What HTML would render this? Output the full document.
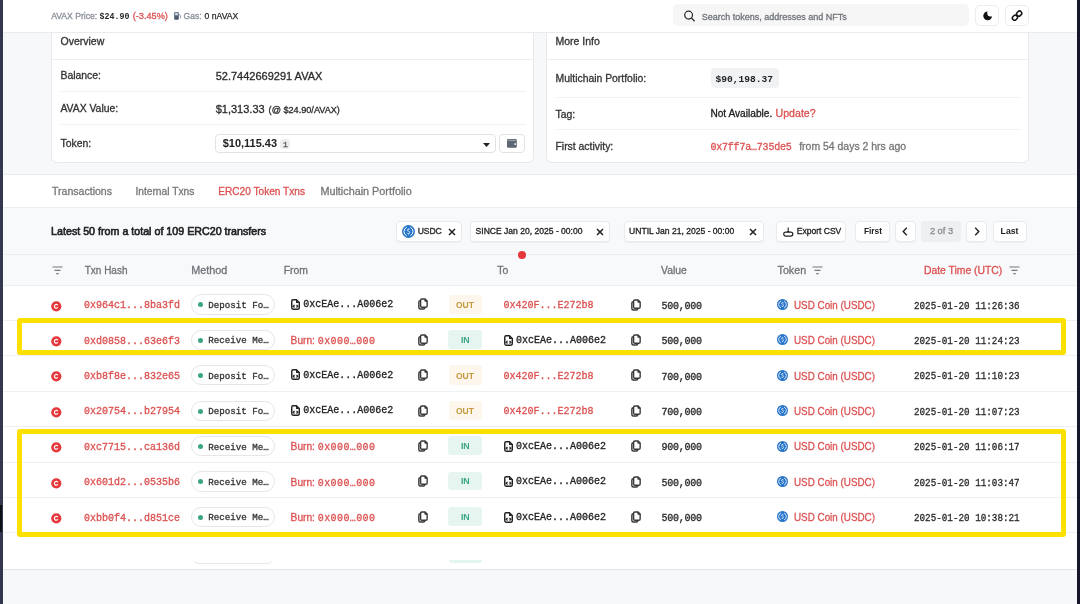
<!DOCTYPE html>
<html><head><meta charset="utf-8"><title>ERC20 Token Txns</title>
<style>
html,body{margin:0;padding:0;}
body{width:1080px;height:604px;overflow:hidden;position:relative;background:#f7f8fa;font-family:'Liberation Sans',sans-serif;}
#root{position:absolute;left:0;top:0;width:1080px;height:604px;will-change:transform;background:#f7f8fa;overflow:hidden;}
.t{position:absolute;white-space:nowrap;line-height:1;-webkit-text-stroke-width:0.3px;}
.b{position:absolute;}
.edgeL{position:absolute;left:0;top:0;width:3.3px;height:604px;background:#333850;z-index:10;}
.edgeR{position:absolute;left:1076.6px;top:0;width:3.4px;height:604px;background:#16172a;z-index:10;}
</style></head><body>
<div id="root">
<div class="edgeL"></div><div class="edgeR"></div><div class="b" style="left:0;top:504.7px;width:2.4px;height:27.8px;background:#0e0f14;z-index:11"></div>
<div class="b" style="left:3.00px;top:0.00px;width:1074.00px;height:32.00px;background:#fff;border-bottom:1px solid #e9ebee;z-index:5"></div>
<div class="t" style="left:51.20px;top:12.00px;font-size:8.6px;color:#8b9099;font-family:'Liberation Sans', sans-serif;font-weight:400;z-index:6;">AVAX Price:</div>
<div class="t" style="left:99.50px;top:13.00px;font-size:8.3px;color:#2a2a2a;font-family:'Liberation Mono', monospace;font-weight:700;z-index:6;-webkit-text-stroke-width:0;">$24.90</div>
<div class="t" style="left:132.70px;top:12.00px;font-size:9.2px;color:#dc5252;font-family:'Liberation Sans', sans-serif;font-weight:400;z-index:6;">(-3.45%)</div>
<svg class="b" style="left:174px;top:12px;z-index:6" width="7.5" height="8" viewBox="0 0 7.5 8"><rect x="0.2" y="0.3" width="4.6" height="7.5" rx="0.8" fill="#4d5b6e"/><rect x="1.1" y="1.2" width="2.8" height="2.1" fill="#dfe5ee"/><path d="M4.8 2.4 L6.6 3.6 V6.4" stroke="#7f8ea3" stroke-width="0.9" fill="none"/></svg>
<div class="t" style="left:183.60px;top:12.00px;font-size:8.6px;color:#8b9099;font-family:'Liberation Sans', sans-serif;font-weight:400;z-index:6;">Gas:</div>
<div class="t" style="left:204.60px;top:12.00px;font-size:8.6px;color:#2a2a2a;font-family:'Liberation Sans', sans-serif;font-weight:400;-webkit-text-stroke:0.25px #2a2a2a;z-index:6;">0 nAVAX</div>
<div class="b" style="left:673.00px;top:4.20px;width:296.00px;height:22.20px;background:#f6f6f7;border-radius:5px;z-index:6"></div>
<svg class="b" style="left:683px;top:10.2px;z-index:7" width="13" height="13" viewBox="0 0 13 13"><circle cx="5.6" cy="5.1" r="3.9" fill="none" stroke="#2a2a2a" stroke-width="1.25"/><path d="M8.4 7.9 L11.6 11.2" stroke="#2a2a2a" stroke-width="1.3"/></svg>
<div class="t" style="left:701.80px;top:13.00px;font-size:9.0px;color:#70747a;font-family:'Liberation Sans', sans-serif;font-weight:400;z-index:7;z-index:6;">Search tokens, addresses and NFTs</div>
<div class="b" style="left:975.30px;top:4.50px;width:23.60px;height:21.90px;background:#fff;border:1px solid #ececee;border-radius:5px;box-sizing:border-box;z-index:6"></div>
<svg class="b" style="left:982.6px;top:10.8px;z-index:7" width="10" height="10" viewBox="0 0 10 10"><defs><mask id="mm"><rect width="10" height="10" fill="#fff"/><circle cx="7.7" cy="2.1" r="3.5" fill="#000"/></mask></defs><circle cx="4.7" cy="4.8" r="4.4" fill="#111" mask="url(#mm)"/></svg>
<div class="b" style="left:1005.30px;top:4.50px;width:23.90px;height:21.90px;background:#fff;border:1px solid #ececee;border-radius:5px;box-sizing:border-box;z-index:6"></div>
<svg class="b" style="left:1011.2px;top:9.8px;z-index:7" width="12" height="11.5" viewBox="0 0 12 11.5"><g fill="none" stroke="#111" stroke-width="1.5"><rect x="6.05" y="1.0" width="4.3" height="5.2" rx="1.9" transform="rotate(45 8.2 3.6)"/><rect x="1.75" y="5.1" width="4.3" height="5.2" rx="1.9" transform="rotate(45 3.9 7.7)"/></g></svg>
<div class="b" style="left:51.00px;top:10.00px;width:482.50px;height:152.50px;background:#fff;border:1px solid #e7e9ec;border-radius:6px;box-sizing:border-box"></div>
<div class="b" style="left:52.50px;top:58.50px;width:480.00px;height:1.00px;background:#eceef0"></div>
<div class="t" style="left:60.50px;top:36.00px;font-size:10.5px;color:#333;font-family:'Liberation Sans', sans-serif;font-weight:400;">Overview</div>
<div class="t" style="left:60.50px;top:71.00px;font-size:10.4px;color:#333;font-family:'Liberation Sans', sans-serif;font-weight:400;">Balance:</div>
<div class="t" style="left:215.70px;top:71.00px;font-size:11.0px;color:#2b2b2b;font-family:'Liberation Sans', sans-serif;font-weight:400;">52.7442669291 AVAX</div>
<div class="b" style="left:60.50px;top:91.20px;width:465.50px;height:1.00px;background:#f0f1f3"></div>
<div class="t" style="left:60.40px;top:104.00px;font-size:10.4px;color:#333;font-family:'Liberation Sans', sans-serif;font-weight:400;">AVAX Value:</div>
<div class="t" style="left:215.70px;top:104.00px;font-size:11.0px;color:#2b2b2b;font-family:'Liberation Sans', sans-serif;font-weight:400;">$1,313.33</div>
<div class="t" style="left:268.60px;top:106.00px;font-size:9.15px;color:#2b2b2b;font-family:'Liberation Sans', sans-serif;font-weight:400;">(@ $24.90/AVAX)</div>
<div class="b" style="left:60.50px;top:124.40px;width:465.50px;height:1.00px;background:#f0f1f3"></div>
<div class="t" style="left:60.50px;top:139.00px;font-size:10.4px;color:#333;font-family:'Liberation Sans', sans-serif;font-weight:400;">Token:</div>
<div class="b" style="left:215.10px;top:134.00px;width:281.00px;height:19.00px;background:#fff;border:1px solid #dfe2e6;border-radius:4px;box-sizing:border-box"></div>
<div class="t" style="left:222.70px;top:138.00px;font-size:10.99px;color:#222;font-family:'Liberation Sans', sans-serif;font-weight:700;-webkit-text-stroke-width:0;">$10,115.43</div>
<div class="b" style="left:280.30px;top:138.60px;width:10.20px;height:10.60px;background:#eceef0;border-radius:3px"></div>
<div class="t" style="left:283.00px;top:141.00px;font-size:8px;color:#555;font-family:'Liberation Mono', monospace;font-weight:400;">1</div>
<svg class="b" style="left:483.00px;top:142.50px" width="7" height="4" viewBox="0 0 7 4"><path d="M0 0 H7 L3.5 4 Z" fill="#222"/></svg>
<div class="b" style="left:499.10px;top:134.00px;width:26.00px;height:19.00px;background:#fff;border:1px solid #dfe2e6;border-radius:4px;box-sizing:border-box"></div>
<svg class="b" style="left:507.30px;top:139.40px" width="10" height="9" viewBox="0 0 10 9"><rect x="0" y="0" width="9.8" height="8.8" rx="1.2" fill="#5d6673"/><rect x="0.6" y="0.9" width="8.6" height="0.9" fill="#a9b0ba"/><rect x="7.2" y="4.2" width="1.8" height="1.8" fill="#d5d9de"/></svg>
<div class="b" style="left:546.30px;top:10.00px;width:482.90px;height:152.50px;background:#fff;border:1px solid #e7e9ec;border-radius:6px;box-sizing:border-box"></div>
<div class="b" style="left:547.30px;top:58.50px;width:481.00px;height:1.00px;background:#eceef0"></div>
<div class="t" style="left:555.50px;top:36.00px;font-size:10.5px;color:#333;font-family:'Liberation Sans', sans-serif;font-weight:400;">More Info</div>
<div class="t" style="left:555.50px;top:74.00px;font-size:10.4px;color:#333;font-family:'Liberation Sans', sans-serif;font-weight:400;">Multichain Portfolio:</div>
<div class="b" style="left:710.50px;top:68.00px;width:68.80px;height:19.50px;background:#f1f2f4;border-radius:4px"></div>
<div class="t" style="left:715.50px;top:75.00px;font-size:9.6px;color:#222;font-family:'Liberation Mono', monospace;font-weight:700;-webkit-text-stroke-width:0;">$90,198.37</div>
<div class="b" style="left:555.50px;top:96.60px;width:465.50px;height:1.00px;background:#f0f1f3"></div>
<div class="t" style="left:555.50px;top:110.00px;font-size:10.4px;color:#333;font-family:'Liberation Sans', sans-serif;font-weight:400;">Tag:</div>
<div class="t" style="left:710.40px;top:109.00px;font-size:10.17px;color:#222;font-family:'Liberation Sans', sans-serif;font-weight:400;">Not Available.</div>
<div class="t" style="left:775.60px;top:108.00px;font-size:10.58px;color:#dc5252;font-family:'Liberation Sans', sans-serif;font-weight:400;">Update?</div>
<div class="b" style="left:555.50px;top:129.40px;width:465.50px;height:1.00px;background:#f0f1f3"></div>
<div class="t" style="left:555.50px;top:142.00px;font-size:10.4px;color:#333;font-family:'Liberation Sans', sans-serif;font-weight:400;">First activity:</div>
<div class="t" style="left:710.40px;top:143.00px;font-size:10px;color:#dc5252;font-family:'Liberation Mono', monospace;font-weight:400;letter-spacing:-0.2px;">0x7ff7a…735de5</div>
<div class="t" style="left:799.20px;top:142.00px;font-size:10.46px;color:#777;font-family:'Liberation Sans', sans-serif;font-weight:400;">from 54 days 2 hrs ago</div>
<div class="b" style="left:3.00px;top:174.00px;width:1074.00px;height:395.50px;background:#fff;border-top:1px solid #e9ebee;border-bottom:1px solid #e3e5e8;box-sizing:border-box"></div>
<div class="t" style="left:52.00px;top:186.00px;font-size:10.55px;color:#777;font-family:'Liberation Sans', sans-serif;font-weight:400;">Transactions</div>
<div class="t" style="left:135.40px;top:187.00px;font-size:10.24px;color:#777;font-family:'Liberation Sans', sans-serif;font-weight:400;">Internal Txns</div>
<div class="t" style="left:218.20px;top:187.00px;font-size:10.14px;color:#dc5252;font-family:'Liberation Sans', sans-serif;font-weight:400;">ERC20 Token Txns</div>
<div class="t" style="left:320.40px;top:186.00px;font-size:10.82px;color:#777;font-family:'Liberation Sans', sans-serif;font-weight:400;">Multichain Portfolio</div>
<div class="b" style="left:3.00px;top:207.00px;width:1074.00px;height:78.00px;background:#f8f9fb;border-top:1px solid #eceef0;box-sizing:border-box"></div>
<div class="b" style="left:3.00px;top:254.30px;width:1074.00px;height:1.00px;background:#eceef0"></div>
<div class="b" style="left:3.00px;top:284.60px;width:1074.00px;height:1.00px;background:#eceef0"></div>
<div class="t" style="left:51.10px;top:226.00px;font-size:10.7px;color:#222;font-family:'Liberation Sans', sans-serif;font-weight:400;-webkit-text-stroke-width:0.6px;">Latest 50 from a total of 109 ERC20 transfers</div>
<div class="b" style="left:396.40px;top:220.60px;width:66.00px;height:21.20px;background:#fff;border:1px solid #e8eaed;border-radius:4px;box-sizing:border-box;box-shadow:0 1px 1px rgba(0,0,0,0.04)"></div>
<svg class="b" style="left:402.10px;top:224.80px" width="13" height="13" viewBox="0 0 20 20"><circle cx="10" cy="10" r="10" fill="#2775ca"/><path d="M7.2 3.6 A7 7 0 0 0 7.2 16.4 M12.8 3.6 A7 7 0 0 1 12.8 16.4" fill="none" stroke="#fff" stroke-width="1.5"/><path d="M12 7.6 C11.6 6.8 10.8 6.6 10 6.6 C8.9 6.6 8.1 7.1 8.1 8 C8.1 9.9 12 9.2 12 11.6 C12 12.6 11.1 13.3 10 13.3 C9 13.3 8.3 12.9 7.9 12.1 M10 5.4 V6.6 M10 13.3 V14.6" fill="none" stroke="#fff" stroke-width="1.2"/></svg>
<div class="t" style="left:417.70px;top:227.00px;font-size:8.6px;color:#333;font-family:'Liberation Sans', sans-serif;font-weight:400;-webkit-text-stroke-width:0.4px;letter-spacing:-0.1px;">USDC</div>
<svg class="b" style="left:448.00px;top:227.60px" width="8" height="8" viewBox="0 0 8 8"><path d="M1 1 L7 7 M7 1 L1 7" stroke="#222" stroke-width="1.5" fill="none"/></svg>
<div class="b" style="left:469.90px;top:220.60px;width:140.10px;height:21.20px;background:#fff;border:1px solid #e8eaed;border-radius:4px;box-sizing:border-box;box-shadow:0 1px 1px rgba(0,0,0,0.04)"></div>
<div class="t" style="left:475.60px;top:227.00px;font-size:8.55px;color:#222;font-family:'Liberation Sans', sans-serif;font-weight:400;">SINCE Jan 20, 2025 - 00:00</div>
<svg class="b" style="left:596.00px;top:227.60px" width="8" height="8" viewBox="0 0 8 8"><path d="M1 1 L7 7 M7 1 L1 7" stroke="#222" stroke-width="1.5" fill="none"/></svg>
<div class="b" style="left:623.70px;top:220.60px;width:140.30px;height:21.20px;background:#fff;border:1px solid #e8eaed;border-radius:4px;box-sizing:border-box;box-shadow:0 1px 1px rgba(0,0,0,0.04)"></div>
<div class="t" style="left:629.10px;top:227.00px;font-size:8.55px;color:#222;font-family:'Liberation Sans', sans-serif;font-weight:400;">UNTIL Jan 21, 2025 - 00:00</div>
<svg class="b" style="left:749.20px;top:227.60px" width="8" height="8" viewBox="0 0 8 8"><path d="M1 1 L7 7 M7 1 L1 7" stroke="#222" stroke-width="1.5" fill="none"/></svg>
<div class="b" style="left:776.40px;top:220.60px;width:69.90px;height:21.20px;background:#fff;border:1px solid #e8eaed;border-radius:4px;box-sizing:border-box;box-shadow:0 1px 1px rgba(0,0,0,0.04)"></div>
<svg class="b" style="left:783.00px;top:226.50px" width="10.5" height="10" viewBox="0 0 10.5 10"><path d="M5.2 0.6 V5.2" stroke="#222" stroke-width="1.1" fill="none"/><path d="M3.7 4 L5.2 5.6 L6.7 4 Z" fill="#222"/><rect x="0.7" y="5.1" width="9.1" height="4" rx="2" fill="none" stroke="#222" stroke-width="1.2"/></svg>
<div class="t" style="left:796.70px;top:227.00px;font-size:8.54px;color:#222;font-family:'Liberation Sans', sans-serif;font-weight:400;">Export CSV</div>
<div class="b" style="left:854.80px;top:220.60px;width:35.50px;height:21.20px;background:#fff;border:1px solid #e8eaed;border-radius:4px;box-sizing:border-box;box-shadow:0 1px 1px rgba(0,0,0,0.04)"></div>
<div class="t" style="left:863.90px;top:227.00px;font-size:8.35px;color:#222;font-family:'Liberation Sans', sans-serif;font-weight:700;-webkit-text-stroke-width:0;">First</div>
<div class="b" style="left:895.00px;top:220.60px;width:21.40px;height:21.20px;background:#fff;border:1px solid #e8eaed;border-radius:4px;box-sizing:border-box;box-shadow:0 1px 1px rgba(0,0,0,0.04)"></div>
<svg class="b" style="left:902.00px;top:227.00px" width="6" height="9" viewBox="0 0 6 9"><path d="M4.8 0.8 L1.2 4.5 L4.8 8.2" stroke="#222" stroke-width="1.4" fill="none"/></svg>
<div class="b" style="left:921.20px;top:220.60px;width:40.20px;height:21.20px;background:#eeeff1;border-radius:4px"></div>
<div class="t" style="left:929.90px;top:227.00px;font-size:9.27px;color:#8a8d91;font-family:'Liberation Sans', sans-serif;font-weight:400;">2 of 3</div>
<div class="b" style="left:966.40px;top:220.60px;width:21.10px;height:21.20px;background:#fff;border:1px solid #e8eaed;border-radius:4px;box-sizing:border-box;box-shadow:0 1px 1px rgba(0,0,0,0.04)"></div>
<svg class="b" style="left:974.00px;top:227.00px" width="6" height="9" viewBox="0 0 6 9"><path d="M1.2 0.8 L4.8 4.5 L1.2 8.2" stroke="#222" stroke-width="1.4" fill="none"/></svg>
<div class="b" style="left:992.50px;top:220.60px;width:34.20px;height:21.20px;background:#fff;border:1px solid #e8eaed;border-radius:4px;box-sizing:border-box;box-shadow:0 1px 1px rgba(0,0,0,0.04)"></div>
<div class="t" style="left:1000.60px;top:227.00px;font-size:8.66px;color:#222;font-family:'Liberation Sans', sans-serif;font-weight:700;-webkit-text-stroke-width:0;">Last</div>
<div class="b" style="left:518.20px;top:251.10px;width:8.00px;height:8.00px;background:#e5383d;border-radius:50%;z-index:3"></div>
<svg class="b" style="left:51.50px;top:266.00px" width="11" height="9" viewBox="0 0 11 9"><path d="M0.5 1 H10.5 M2.5 4.3 H8.5 M4.3 7.6 H6.7" stroke="#777" stroke-width="1.2" fill="none"/></svg>
<div class="t" style="left:84.70px;top:266.00px;font-size:10.0px;color:#6f7378;font-family:'Liberation Sans', sans-serif;font-weight:400;">Txn Hash</div>
<div class="t" style="left:191.20px;top:265.00px;font-size:10.85px;color:#6f7378;font-family:'Liberation Sans', sans-serif;font-weight:400;">Method</div>
<div class="t" style="left:283.70px;top:266.00px;font-size:10.4px;color:#6f7378;font-family:'Liberation Sans', sans-serif;font-weight:400;">From</div>
<div class="t" style="left:497.30px;top:266.00px;font-size:10.4px;color:#6f7378;font-family:'Liberation Sans', sans-serif;font-weight:400;">To</div>
<div class="t" style="left:661.10px;top:266.00px;font-size:10.4px;color:#6f7378;font-family:'Liberation Sans', sans-serif;font-weight:400;">Value</div>
<div class="t" style="left:777.60px;top:265.00px;font-size:10.68px;color:#6f7378;font-family:'Liberation Sans', sans-serif;font-weight:400;">Token</div>
<svg class="b" style="left:812.00px;top:266.20px" width="11" height="9" viewBox="0 0 11 9"><path d="M0.5 1 H10.5 M2.5 4.3 H8.5 M4.3 7.6 H6.7" stroke="#777" stroke-width="1.2" fill="none"/></svg>
<div class="t" style="left:923.90px;top:266.00px;font-size:10.39px;color:#dc5252;font-family:'Liberation Sans', sans-serif;font-weight:400;">Date Time (UTC)</div>
<svg class="b" style="left:1009.00px;top:266.20px" width="11" height="9" viewBox="0 0 11 9"><path d="M0.5 1 H10.5 M2.5 4.3 H8.5 M4.3 7.6 H6.7" stroke="#777" stroke-width="1.2" fill="none"/></svg>
<svg class="b" style="left:50.60px;top:300.50px" width="11" height="11" viewBox="0 0 11 11"><circle cx="5.3" cy="5.3" r="5.1" fill="#e5383d"/><path d="M6.9 4.3 A1.9 1.9 0 1 0 6.9 6.3" fill="none" stroke="#fff" stroke-width="1.2"/></svg>
<div class="t" style="left:84.10px;top:301.00px;font-size:10px;color:#dc5252;font-family:'Liberation Mono', monospace;font-weight:400;">0x964c1...8ba3fd</div>
<div class="b" style="left:191.40px;top:294.40px;width:84.00px;height:20.30px;border:1px solid #e4e6e9;border-radius:11px;box-sizing:border-box;background:#fff"></div>
<div class="b" style="left:197.60px;top:302.30px;width:5.00px;height:5.00px;background:#3aa57f;border-radius:50%"></div>
<div class="t" style="left:208.30px;top:301.00px;font-size:9.17px;color:#333;font-family:'Liberation Mono', monospace;font-weight:400;">Deposit Fo…</div>
<svg class="b" style="left:290.60px;top:298.60px" width="9" height="11" viewBox="0 0 9 11"><path d="M2.1 0.75 H5.4 L8.3 3.6 V8.6 Q8.3 10.25 6.7 10.25 H2.1 Q0.75 10.25 0.75 8.6 V2.3 Q0.75 0.75 2.1 0.75 Z" fill="#fff" stroke="#222" stroke-width="1.45"/><path d="M5.0 0.8 L8.3 4.1 H5.6 Q5.0 4.1 5.0 3.5 Z" fill="#222"/><path d="M3.5 5.9 L2.2 7.2 L3.5 8.5 M5.5 5.9 L6.8 7.2 L5.5 8.5" fill="none" stroke="#222" stroke-width="1.25"/></svg>
<div class="t" style="left:303.30px;top:300.00px;font-size:10px;color:#222;font-family:'Liberation Mono', monospace;font-weight:400;">0xcEAe...A006e2</div>
<svg class="b" style="left:417.90px;top:298.30px" width="10.2" height="12" viewBox="0 0 11 13"><rect x="0.9" y="3" width="6.5" height="9" rx="1.6" fill="#fff" stroke="#383838" stroke-width="1.55"/><path d="M4.2 1.1 H7.6 L9.9 3.4 V8.6 Q9.9 10 8.5 10 H4.2 Q2.8 10 2.8 8.6 V2.5 Q2.8 1.1 4.2 1.1 Z" fill="#fff" stroke="#383838" stroke-width="1.5"/><path d="M7.4 1.1 V3.6 H9.9" fill="#3d3d3d" stroke="#3d3d3d" stroke-width="0.9"/></svg>
<div class="b" style="left:448.50px;top:294.50px;width:33.60px;height:19.60px;background:#fcf6ec;border-radius:3px"></div>
<div class="t" style="left:456.00px;top:301.00px;font-size:8.53px;color:#c49a3c;font-family:'Liberation Sans', sans-serif;font-weight:700;-webkit-text-stroke-width:0;">OUT</div>
<div class="t" style="left:503.60px;top:301.00px;font-size:10px;color:#dc5252;font-family:'Liberation Mono', monospace;font-weight:400;">0x420F...E272b8</div>
<svg class="b" style="left:631.20px;top:298.60px" width="10.2" height="12" viewBox="0 0 11 13"><rect x="0.9" y="3" width="6.5" height="9" rx="1.6" fill="#fff" stroke="#383838" stroke-width="1.55"/><path d="M4.2 1.1 H7.6 L9.9 3.4 V8.6 Q9.9 10 8.5 10 H4.2 Q2.8 10 2.8 8.6 V2.5 Q2.8 1.1 4.2 1.1 Z" fill="#fff" stroke="#383838" stroke-width="1.5"/><path d="M7.4 1.1 V3.6 H9.9" fill="#3d3d3d" stroke="#3d3d3d" stroke-width="0.9"/></svg>
<div class="t" style="left:661.40px;top:302.00px;font-size:10.0px;color:#2a2a2a;font-family:'Liberation Mono', monospace;font-weight:400;letter-spacing:-0.22px;">500,000</div>
<svg class="b" style="left:777.00px;top:299.00px" width="11" height="11" viewBox="0 0 20 20"><circle cx="10" cy="10" r="10" fill="#2775ca"/><path d="M7.2 3.6 A7 7 0 0 0 7.2 16.4 M12.8 3.6 A7 7 0 0 1 12.8 16.4" fill="none" stroke="#fff" stroke-width="1.5"/><path d="M12 7.6 C11.6 6.8 10.8 6.6 10 6.6 C8.9 6.6 8.1 7.1 8.1 8 C8.1 9.9 12 9.2 12 11.6 C12 12.6 11.1 13.3 10 13.3 C9 13.3 8.3 12.9 7.9 12.1 M10 5.4 V6.6 M10 13.3 V14.6" fill="none" stroke="#fff" stroke-width="1.2"/></svg>
<div class="t" style="left:793.90px;top:300.00px;font-size:10.8px;color:#dc5252;font-family:'Liberation Sans', sans-serif;font-weight:400;transform:scaleX(0.912);transform-origin:0 0;">USD Coin (USDC)</div>
<div class="t" style="left:914.30px;top:301.00px;font-size:10.3px;color:#2a2a2a;font-family:'Liberation Mono', monospace;font-weight:400;transform:scaleX(0.9);transform-origin:0 0;-webkit-text-stroke:0.3px #2a2a2a;">2025-01-20 11:26:36</div>
<div class="b" style="left:3.00px;top:319.90px;width:1074.00px;height:1.00px;background:#eff0f2"></div>
<svg class="b" style="left:50.60px;top:335.90px" width="11" height="11" viewBox="0 0 11 11"><circle cx="5.3" cy="5.3" r="5.1" fill="#e5383d"/><path d="M6.9 4.3 A1.9 1.9 0 1 0 6.9 6.3" fill="none" stroke="#fff" stroke-width="1.2"/></svg>
<div class="t" style="left:84.10px;top:337.00px;font-size:10px;color:#dc5252;font-family:'Liberation Mono', monospace;font-weight:400;">0xd0858...63e6f3</div>
<div class="b" style="left:191.40px;top:329.80px;width:84.00px;height:20.30px;border:1px solid #e4e6e9;border-radius:11px;box-sizing:border-box;background:#fff"></div>
<div class="b" style="left:197.60px;top:337.70px;width:5.00px;height:5.00px;background:#3aa57f;border-radius:50%"></div>
<div class="t" style="left:208.30px;top:336.00px;font-size:9.17px;color:#333;font-family:'Liberation Mono', monospace;font-weight:400;">Receive Me…</div>
<div class="t" style="left:290.60px;top:336.00px;font-size:10.2px;color:#dc5252;font-family:'Liberation Sans', sans-serif;font-weight:400;">Burn:</div>
<div class="t" style="left:317.80px;top:337.00px;font-size:10px;color:#dc5252;font-family:'Liberation Mono', monospace;font-weight:400;letter-spacing:0.4px;">0x000…000</div>
<svg class="b" style="left:417.90px;top:333.70px" width="10.2" height="12" viewBox="0 0 11 13"><rect x="0.9" y="3" width="6.5" height="9" rx="1.6" fill="#fff" stroke="#383838" stroke-width="1.55"/><path d="M4.2 1.1 H7.6 L9.9 3.4 V8.6 Q9.9 10 8.5 10 H4.2 Q2.8 10 2.8 8.6 V2.5 Q2.8 1.1 4.2 1.1 Z" fill="#fff" stroke="#383838" stroke-width="1.5"/><path d="M7.4 1.1 V3.6 H9.9" fill="#3d3d3d" stroke="#3d3d3d" stroke-width="0.9"/></svg>
<div class="b" style="left:448.30px;top:330.00px;width:34.00px;height:18.80px;background:#e7f5f1;border-radius:3px"></div>
<div class="t" style="left:460.90px;top:336.00px;font-size:8.8px;color:#3aa585;font-family:'Liberation Sans', sans-serif;font-weight:700;-webkit-text-stroke-width:0;">IN</div>
<svg class="b" style="left:503.60px;top:334.80px" width="9" height="11" viewBox="0 0 9 11"><path d="M2.1 0.75 H5.4 L8.3 3.6 V8.6 Q8.3 10.25 6.7 10.25 H2.1 Q0.75 10.25 0.75 8.6 V2.3 Q0.75 0.75 2.1 0.75 Z" fill="#fff" stroke="#222" stroke-width="1.45"/><path d="M5.0 0.8 L8.3 4.1 H5.6 Q5.0 4.1 5.0 3.5 Z" fill="#222"/><path d="M3.5 5.9 L2.2 7.2 L3.5 8.5 M5.5 5.9 L6.8 7.2 L5.5 8.5" fill="none" stroke="#222" stroke-width="1.25"/></svg>
<div class="t" style="left:516.10px;top:336.00px;font-size:10px;color:#222;font-family:'Liberation Mono', monospace;font-weight:400;">0xcEAe...A006e2</div>
<svg class="b" style="left:631.20px;top:334.00px" width="10.2" height="12" viewBox="0 0 11 13"><rect x="0.9" y="3" width="6.5" height="9" rx="1.6" fill="#fff" stroke="#383838" stroke-width="1.55"/><path d="M4.2 1.1 H7.6 L9.9 3.4 V8.6 Q9.9 10 8.5 10 H4.2 Q2.8 10 2.8 8.6 V2.5 Q2.8 1.1 4.2 1.1 Z" fill="#fff" stroke="#383838" stroke-width="1.5"/><path d="M7.4 1.1 V3.6 H9.9" fill="#3d3d3d" stroke="#3d3d3d" stroke-width="0.9"/></svg>
<div class="t" style="left:661.40px;top:337.00px;font-size:10.0px;color:#2a2a2a;font-family:'Liberation Mono', monospace;font-weight:400;letter-spacing:-0.22px;">500,000</div>
<svg class="b" style="left:777.00px;top:334.40px" width="11" height="11" viewBox="0 0 20 20"><circle cx="10" cy="10" r="10" fill="#2775ca"/><path d="M7.2 3.6 A7 7 0 0 0 7.2 16.4 M12.8 3.6 A7 7 0 0 1 12.8 16.4" fill="none" stroke="#fff" stroke-width="1.5"/><path d="M12 7.6 C11.6 6.8 10.8 6.6 10 6.6 C8.9 6.6 8.1 7.1 8.1 8 C8.1 9.9 12 9.2 12 11.6 C12 12.6 11.1 13.3 10 13.3 C9 13.3 8.3 12.9 7.9 12.1 M10 5.4 V6.6 M10 13.3 V14.6" fill="none" stroke="#fff" stroke-width="1.2"/></svg>
<div class="t" style="left:793.90px;top:335.00px;font-size:10.8px;color:#dc5252;font-family:'Liberation Sans', sans-serif;font-weight:400;transform:scaleX(0.912);transform-origin:0 0;">USD Coin (USDC)</div>
<div class="t" style="left:914.30px;top:336.00px;font-size:10.3px;color:#2a2a2a;font-family:'Liberation Mono', monospace;font-weight:400;transform:scaleX(0.9);transform-origin:0 0;-webkit-text-stroke:0.3px #2a2a2a;">2025-01-20 11:24:23</div>
<div class="b" style="left:3.00px;top:355.30px;width:1074.00px;height:1.00px;background:#eff0f2"></div>
<svg class="b" style="left:50.60px;top:371.30px" width="11" height="11" viewBox="0 0 11 11"><circle cx="5.3" cy="5.3" r="5.1" fill="#e5383d"/><path d="M6.9 4.3 A1.9 1.9 0 1 0 6.9 6.3" fill="none" stroke="#fff" stroke-width="1.2"/></svg>
<div class="t" style="left:84.10px;top:372.00px;font-size:10px;color:#dc5252;font-family:'Liberation Mono', monospace;font-weight:400;">0xb8f8e...832e65</div>
<div class="b" style="left:191.40px;top:365.20px;width:84.00px;height:20.30px;border:1px solid #e4e6e9;border-radius:11px;box-sizing:border-box;background:#fff"></div>
<div class="b" style="left:197.60px;top:373.10px;width:5.00px;height:5.00px;background:#3aa57f;border-radius:50%"></div>
<div class="t" style="left:208.30px;top:372.00px;font-size:9.17px;color:#333;font-family:'Liberation Mono', monospace;font-weight:400;">Deposit Fo…</div>
<svg class="b" style="left:290.60px;top:369.40px" width="9" height="11" viewBox="0 0 9 11"><path d="M2.1 0.75 H5.4 L8.3 3.6 V8.6 Q8.3 10.25 6.7 10.25 H2.1 Q0.75 10.25 0.75 8.6 V2.3 Q0.75 0.75 2.1 0.75 Z" fill="#fff" stroke="#222" stroke-width="1.45"/><path d="M5.0 0.8 L8.3 4.1 H5.6 Q5.0 4.1 5.0 3.5 Z" fill="#222"/><path d="M3.5 5.9 L2.2 7.2 L3.5 8.5 M5.5 5.9 L6.8 7.2 L5.5 8.5" fill="none" stroke="#222" stroke-width="1.25"/></svg>
<div class="t" style="left:303.30px;top:371.00px;font-size:10px;color:#222;font-family:'Liberation Mono', monospace;font-weight:400;">0xcEAe...A006e2</div>
<svg class="b" style="left:417.90px;top:369.10px" width="10.2" height="12" viewBox="0 0 11 13"><rect x="0.9" y="3" width="6.5" height="9" rx="1.6" fill="#fff" stroke="#383838" stroke-width="1.55"/><path d="M4.2 1.1 H7.6 L9.9 3.4 V8.6 Q9.9 10 8.5 10 H4.2 Q2.8 10 2.8 8.6 V2.5 Q2.8 1.1 4.2 1.1 Z" fill="#fff" stroke="#383838" stroke-width="1.5"/><path d="M7.4 1.1 V3.6 H9.9" fill="#3d3d3d" stroke="#3d3d3d" stroke-width="0.9"/></svg>
<div class="b" style="left:448.50px;top:365.30px;width:33.60px;height:19.60px;background:#fcf6ec;border-radius:3px"></div>
<div class="t" style="left:456.00px;top:372.00px;font-size:8.53px;color:#c49a3c;font-family:'Liberation Sans', sans-serif;font-weight:700;-webkit-text-stroke-width:0;">OUT</div>
<div class="t" style="left:503.60px;top:372.00px;font-size:10px;color:#dc5252;font-family:'Liberation Mono', monospace;font-weight:400;">0x420F...E272b8</div>
<svg class="b" style="left:631.20px;top:369.40px" width="10.2" height="12" viewBox="0 0 11 13"><rect x="0.9" y="3" width="6.5" height="9" rx="1.6" fill="#fff" stroke="#383838" stroke-width="1.55"/><path d="M4.2 1.1 H7.6 L9.9 3.4 V8.6 Q9.9 10 8.5 10 H4.2 Q2.8 10 2.8 8.6 V2.5 Q2.8 1.1 4.2 1.1 Z" fill="#fff" stroke="#383838" stroke-width="1.5"/><path d="M7.4 1.1 V3.6 H9.9" fill="#3d3d3d" stroke="#3d3d3d" stroke-width="0.9"/></svg>
<div class="t" style="left:661.40px;top:373.00px;font-size:10.0px;color:#2a2a2a;font-family:'Liberation Mono', monospace;font-weight:400;letter-spacing:-0.22px;">700,000</div>
<svg class="b" style="left:777.00px;top:369.80px" width="11" height="11" viewBox="0 0 20 20"><circle cx="10" cy="10" r="10" fill="#2775ca"/><path d="M7.2 3.6 A7 7 0 0 0 7.2 16.4 M12.8 3.6 A7 7 0 0 1 12.8 16.4" fill="none" stroke="#fff" stroke-width="1.5"/><path d="M12 7.6 C11.6 6.8 10.8 6.6 10 6.6 C8.9 6.6 8.1 7.1 8.1 8 C8.1 9.9 12 9.2 12 11.6 C12 12.6 11.1 13.3 10 13.3 C9 13.3 8.3 12.9 7.9 12.1 M10 5.4 V6.6 M10 13.3 V14.6" fill="none" stroke="#fff" stroke-width="1.2"/></svg>
<div class="t" style="left:793.90px;top:371.00px;font-size:10.8px;color:#dc5252;font-family:'Liberation Sans', sans-serif;font-weight:400;transform:scaleX(0.912);transform-origin:0 0;">USD Coin (USDC)</div>
<div class="t" style="left:914.30px;top:371.00px;font-size:10.3px;color:#2a2a2a;font-family:'Liberation Mono', monospace;font-weight:400;transform:scaleX(0.9);transform-origin:0 0;-webkit-text-stroke:0.3px #2a2a2a;">2025-01-20 11:10:23</div>
<div class="b" style="left:3.00px;top:390.70px;width:1074.00px;height:1.00px;background:#eff0f2"></div>
<svg class="b" style="left:50.60px;top:406.70px" width="11" height="11" viewBox="0 0 11 11"><circle cx="5.3" cy="5.3" r="5.1" fill="#e5383d"/><path d="M6.9 4.3 A1.9 1.9 0 1 0 6.9 6.3" fill="none" stroke="#fff" stroke-width="1.2"/></svg>
<div class="t" style="left:84.10px;top:407.00px;font-size:10px;color:#dc5252;font-family:'Liberation Mono', monospace;font-weight:400;">0x20754...b27954</div>
<div class="b" style="left:191.40px;top:400.60px;width:84.00px;height:20.30px;border:1px solid #e4e6e9;border-radius:11px;box-sizing:border-box;background:#fff"></div>
<div class="b" style="left:197.60px;top:408.50px;width:5.00px;height:5.00px;background:#3aa57f;border-radius:50%"></div>
<div class="t" style="left:208.30px;top:407.00px;font-size:9.17px;color:#333;font-family:'Liberation Mono', monospace;font-weight:400;">Deposit Fo…</div>
<svg class="b" style="left:290.60px;top:404.80px" width="9" height="11" viewBox="0 0 9 11"><path d="M2.1 0.75 H5.4 L8.3 3.6 V8.6 Q8.3 10.25 6.7 10.25 H2.1 Q0.75 10.25 0.75 8.6 V2.3 Q0.75 0.75 2.1 0.75 Z" fill="#fff" stroke="#222" stroke-width="1.45"/><path d="M5.0 0.8 L8.3 4.1 H5.6 Q5.0 4.1 5.0 3.5 Z" fill="#222"/><path d="M3.5 5.9 L2.2 7.2 L3.5 8.5 M5.5 5.9 L6.8 7.2 L5.5 8.5" fill="none" stroke="#222" stroke-width="1.25"/></svg>
<div class="t" style="left:303.30px;top:406.00px;font-size:10px;color:#222;font-family:'Liberation Mono', monospace;font-weight:400;">0xcEAe...A006e2</div>
<svg class="b" style="left:417.90px;top:404.50px" width="10.2" height="12" viewBox="0 0 11 13"><rect x="0.9" y="3" width="6.5" height="9" rx="1.6" fill="#fff" stroke="#383838" stroke-width="1.55"/><path d="M4.2 1.1 H7.6 L9.9 3.4 V8.6 Q9.9 10 8.5 10 H4.2 Q2.8 10 2.8 8.6 V2.5 Q2.8 1.1 4.2 1.1 Z" fill="#fff" stroke="#383838" stroke-width="1.5"/><path d="M7.4 1.1 V3.6 H9.9" fill="#3d3d3d" stroke="#3d3d3d" stroke-width="0.9"/></svg>
<div class="b" style="left:448.50px;top:400.70px;width:33.60px;height:19.60px;background:#fcf6ec;border-radius:3px"></div>
<div class="t" style="left:456.00px;top:407.00px;font-size:8.53px;color:#c49a3c;font-family:'Liberation Sans', sans-serif;font-weight:700;-webkit-text-stroke-width:0;">OUT</div>
<div class="t" style="left:503.60px;top:407.00px;font-size:10px;color:#dc5252;font-family:'Liberation Mono', monospace;font-weight:400;">0x420F...E272b8</div>
<svg class="b" style="left:631.20px;top:404.80px" width="10.2" height="12" viewBox="0 0 11 13"><rect x="0.9" y="3" width="6.5" height="9" rx="1.6" fill="#fff" stroke="#383838" stroke-width="1.55"/><path d="M4.2 1.1 H7.6 L9.9 3.4 V8.6 Q9.9 10 8.5 10 H4.2 Q2.8 10 2.8 8.6 V2.5 Q2.8 1.1 4.2 1.1 Z" fill="#fff" stroke="#383838" stroke-width="1.5"/><path d="M7.4 1.1 V3.6 H9.9" fill="#3d3d3d" stroke="#3d3d3d" stroke-width="0.9"/></svg>
<div class="t" style="left:661.40px;top:408.00px;font-size:10.0px;color:#2a2a2a;font-family:'Liberation Mono', monospace;font-weight:400;letter-spacing:-0.22px;">700,000</div>
<svg class="b" style="left:777.00px;top:405.20px" width="11" height="11" viewBox="0 0 20 20"><circle cx="10" cy="10" r="10" fill="#2775ca"/><path d="M7.2 3.6 A7 7 0 0 0 7.2 16.4 M12.8 3.6 A7 7 0 0 1 12.8 16.4" fill="none" stroke="#fff" stroke-width="1.5"/><path d="M12 7.6 C11.6 6.8 10.8 6.6 10 6.6 C8.9 6.6 8.1 7.1 8.1 8 C8.1 9.9 12 9.2 12 11.6 C12 12.6 11.1 13.3 10 13.3 C9 13.3 8.3 12.9 7.9 12.1 M10 5.4 V6.6 M10 13.3 V14.6" fill="none" stroke="#fff" stroke-width="1.2"/></svg>
<div class="t" style="left:793.90px;top:406.00px;font-size:10.8px;color:#dc5252;font-family:'Liberation Sans', sans-serif;font-weight:400;transform:scaleX(0.912);transform-origin:0 0;">USD Coin (USDC)</div>
<div class="t" style="left:914.30px;top:407.00px;font-size:10.3px;color:#2a2a2a;font-family:'Liberation Mono', monospace;font-weight:400;transform:scaleX(0.9);transform-origin:0 0;-webkit-text-stroke:0.3px #2a2a2a;">2025-01-20 11:07:23</div>
<div class="b" style="left:3.00px;top:426.10px;width:1074.00px;height:1.00px;background:#eff0f2"></div>
<svg class="b" style="left:50.60px;top:442.10px" width="11" height="11" viewBox="0 0 11 11"><circle cx="5.3" cy="5.3" r="5.1" fill="#e5383d"/><path d="M6.9 4.3 A1.9 1.9 0 1 0 6.9 6.3" fill="none" stroke="#fff" stroke-width="1.2"/></svg>
<div class="t" style="left:84.10px;top:443.00px;font-size:10px;color:#dc5252;font-family:'Liberation Mono', monospace;font-weight:400;">0xc7715...ca136d</div>
<div class="b" style="left:191.40px;top:436.00px;width:84.00px;height:20.30px;border:1px solid #e4e6e9;border-radius:11px;box-sizing:border-box;background:#fff"></div>
<div class="b" style="left:197.60px;top:443.90px;width:5.00px;height:5.00px;background:#3aa57f;border-radius:50%"></div>
<div class="t" style="left:208.30px;top:443.00px;font-size:9.17px;color:#333;font-family:'Liberation Mono', monospace;font-weight:400;">Receive Me…</div>
<div class="t" style="left:290.60px;top:442.00px;font-size:10.2px;color:#dc5252;font-family:'Liberation Sans', sans-serif;font-weight:400;">Burn:</div>
<div class="t" style="left:317.80px;top:443.00px;font-size:10px;color:#dc5252;font-family:'Liberation Mono', monospace;font-weight:400;letter-spacing:0.4px;">0x000…000</div>
<svg class="b" style="left:417.90px;top:439.90px" width="10.2" height="12" viewBox="0 0 11 13"><rect x="0.9" y="3" width="6.5" height="9" rx="1.6" fill="#fff" stroke="#383838" stroke-width="1.55"/><path d="M4.2 1.1 H7.6 L9.9 3.4 V8.6 Q9.9 10 8.5 10 H4.2 Q2.8 10 2.8 8.6 V2.5 Q2.8 1.1 4.2 1.1 Z" fill="#fff" stroke="#383838" stroke-width="1.5"/><path d="M7.4 1.1 V3.6 H9.9" fill="#3d3d3d" stroke="#3d3d3d" stroke-width="0.9"/></svg>
<div class="b" style="left:448.30px;top:436.20px;width:34.00px;height:18.80px;background:#e7f5f1;border-radius:3px"></div>
<div class="t" style="left:460.90px;top:442.00px;font-size:8.8px;color:#3aa585;font-family:'Liberation Sans', sans-serif;font-weight:700;-webkit-text-stroke-width:0;">IN</div>
<svg class="b" style="left:503.60px;top:441.00px" width="9" height="11" viewBox="0 0 9 11"><path d="M2.1 0.75 H5.4 L8.3 3.6 V8.6 Q8.3 10.25 6.7 10.25 H2.1 Q0.75 10.25 0.75 8.6 V2.3 Q0.75 0.75 2.1 0.75 Z" fill="#fff" stroke="#222" stroke-width="1.45"/><path d="M5.0 0.8 L8.3 4.1 H5.6 Q5.0 4.1 5.0 3.5 Z" fill="#222"/><path d="M3.5 5.9 L2.2 7.2 L3.5 8.5 M5.5 5.9 L6.8 7.2 L5.5 8.5" fill="none" stroke="#222" stroke-width="1.25"/></svg>
<div class="t" style="left:516.10px;top:442.00px;font-size:10px;color:#222;font-family:'Liberation Mono', monospace;font-weight:400;">0xcEAe...A006e2</div>
<svg class="b" style="left:631.20px;top:440.20px" width="10.2" height="12" viewBox="0 0 11 13"><rect x="0.9" y="3" width="6.5" height="9" rx="1.6" fill="#fff" stroke="#383838" stroke-width="1.55"/><path d="M4.2 1.1 H7.6 L9.9 3.4 V8.6 Q9.9 10 8.5 10 H4.2 Q2.8 10 2.8 8.6 V2.5 Q2.8 1.1 4.2 1.1 Z" fill="#fff" stroke="#383838" stroke-width="1.5"/><path d="M7.4 1.1 V3.6 H9.9" fill="#3d3d3d" stroke="#3d3d3d" stroke-width="0.9"/></svg>
<div class="t" style="left:661.40px;top:443.00px;font-size:10.0px;color:#2a2a2a;font-family:'Liberation Mono', monospace;font-weight:400;letter-spacing:-0.22px;">900,000</div>
<svg class="b" style="left:777.00px;top:440.60px" width="11" height="11" viewBox="0 0 20 20"><circle cx="10" cy="10" r="10" fill="#2775ca"/><path d="M7.2 3.6 A7 7 0 0 0 7.2 16.4 M12.8 3.6 A7 7 0 0 1 12.8 16.4" fill="none" stroke="#fff" stroke-width="1.5"/><path d="M12 7.6 C11.6 6.8 10.8 6.6 10 6.6 C8.9 6.6 8.1 7.1 8.1 8 C8.1 9.9 12 9.2 12 11.6 C12 12.6 11.1 13.3 10 13.3 C9 13.3 8.3 12.9 7.9 12.1 M10 5.4 V6.6 M10 13.3 V14.6" fill="none" stroke="#fff" stroke-width="1.2"/></svg>
<div class="t" style="left:793.90px;top:441.00px;font-size:10.8px;color:#dc5252;font-family:'Liberation Sans', sans-serif;font-weight:400;transform:scaleX(0.912);transform-origin:0 0;">USD Coin (USDC)</div>
<div class="t" style="left:914.30px;top:442.00px;font-size:10.3px;color:#2a2a2a;font-family:'Liberation Mono', monospace;font-weight:400;transform:scaleX(0.9);transform-origin:0 0;-webkit-text-stroke:0.3px #2a2a2a;">2025-01-20 11:06:17</div>
<div class="b" style="left:3.00px;top:461.50px;width:1074.00px;height:1.00px;background:#eff0f2"></div>
<svg class="b" style="left:50.60px;top:477.50px" width="11" height="11" viewBox="0 0 11 11"><circle cx="5.3" cy="5.3" r="5.1" fill="#e5383d"/><path d="M6.9 4.3 A1.9 1.9 0 1 0 6.9 6.3" fill="none" stroke="#fff" stroke-width="1.2"/></svg>
<div class="t" style="left:84.10px;top:478.00px;font-size:10px;color:#dc5252;font-family:'Liberation Mono', monospace;font-weight:400;">0x601d2...0535b6</div>
<div class="b" style="left:191.40px;top:471.40px;width:84.00px;height:20.30px;border:1px solid #e4e6e9;border-radius:11px;box-sizing:border-box;background:#fff"></div>
<div class="b" style="left:197.60px;top:479.30px;width:5.00px;height:5.00px;background:#3aa57f;border-radius:50%"></div>
<div class="t" style="left:208.30px;top:478.00px;font-size:9.17px;color:#333;font-family:'Liberation Mono', monospace;font-weight:400;">Receive Me…</div>
<div class="t" style="left:290.60px;top:478.00px;font-size:10.2px;color:#dc5252;font-family:'Liberation Sans', sans-serif;font-weight:400;">Burn:</div>
<div class="t" style="left:317.80px;top:479.00px;font-size:10px;color:#dc5252;font-family:'Liberation Mono', monospace;font-weight:400;letter-spacing:0.4px;">0x000…000</div>
<svg class="b" style="left:417.90px;top:475.30px" width="10.2" height="12" viewBox="0 0 11 13"><rect x="0.9" y="3" width="6.5" height="9" rx="1.6" fill="#fff" stroke="#383838" stroke-width="1.55"/><path d="M4.2 1.1 H7.6 L9.9 3.4 V8.6 Q9.9 10 8.5 10 H4.2 Q2.8 10 2.8 8.6 V2.5 Q2.8 1.1 4.2 1.1 Z" fill="#fff" stroke="#383838" stroke-width="1.5"/><path d="M7.4 1.1 V3.6 H9.9" fill="#3d3d3d" stroke="#3d3d3d" stroke-width="0.9"/></svg>
<div class="b" style="left:448.30px;top:471.60px;width:34.00px;height:18.80px;background:#e7f5f1;border-radius:3px"></div>
<div class="t" style="left:460.90px;top:477.00px;font-size:8.8px;color:#3aa585;font-family:'Liberation Sans', sans-serif;font-weight:700;-webkit-text-stroke-width:0;">IN</div>
<svg class="b" style="left:503.60px;top:476.40px" width="9" height="11" viewBox="0 0 9 11"><path d="M2.1 0.75 H5.4 L8.3 3.6 V8.6 Q8.3 10.25 6.7 10.25 H2.1 Q0.75 10.25 0.75 8.6 V2.3 Q0.75 0.75 2.1 0.75 Z" fill="#fff" stroke="#222" stroke-width="1.45"/><path d="M5.0 0.8 L8.3 4.1 H5.6 Q5.0 4.1 5.0 3.5 Z" fill="#222"/><path d="M3.5 5.9 L2.2 7.2 L3.5 8.5 M5.5 5.9 L6.8 7.2 L5.5 8.5" fill="none" stroke="#222" stroke-width="1.25"/></svg>
<div class="t" style="left:516.10px;top:477.00px;font-size:10px;color:#222;font-family:'Liberation Mono', monospace;font-weight:400;">0xcEAe...A006e2</div>
<svg class="b" style="left:631.20px;top:475.60px" width="10.2" height="12" viewBox="0 0 11 13"><rect x="0.9" y="3" width="6.5" height="9" rx="1.6" fill="#fff" stroke="#383838" stroke-width="1.55"/><path d="M4.2 1.1 H7.6 L9.9 3.4 V8.6 Q9.9 10 8.5 10 H4.2 Q2.8 10 2.8 8.6 V2.5 Q2.8 1.1 4.2 1.1 Z" fill="#fff" stroke="#383838" stroke-width="1.5"/><path d="M7.4 1.1 V3.6 H9.9" fill="#3d3d3d" stroke="#3d3d3d" stroke-width="0.9"/></svg>
<div class="t" style="left:661.40px;top:479.00px;font-size:10.0px;color:#2a2a2a;font-family:'Liberation Mono', monospace;font-weight:400;letter-spacing:-0.22px;">500,000</div>
<svg class="b" style="left:777.00px;top:476.00px" width="11" height="11" viewBox="0 0 20 20"><circle cx="10" cy="10" r="10" fill="#2775ca"/><path d="M7.2 3.6 A7 7 0 0 0 7.2 16.4 M12.8 3.6 A7 7 0 0 1 12.8 16.4" fill="none" stroke="#fff" stroke-width="1.5"/><path d="M12 7.6 C11.6 6.8 10.8 6.6 10 6.6 C8.9 6.6 8.1 7.1 8.1 8 C8.1 9.9 12 9.2 12 11.6 C12 12.6 11.1 13.3 10 13.3 C9 13.3 8.3 12.9 7.9 12.1 M10 5.4 V6.6 M10 13.3 V14.6" fill="none" stroke="#fff" stroke-width="1.2"/></svg>
<div class="t" style="left:793.90px;top:477.00px;font-size:10.8px;color:#dc5252;font-family:'Liberation Sans', sans-serif;font-weight:400;transform:scaleX(0.912);transform-origin:0 0;">USD Coin (USDC)</div>
<div class="t" style="left:914.30px;top:478.00px;font-size:10.3px;color:#2a2a2a;font-family:'Liberation Mono', monospace;font-weight:400;transform:scaleX(0.9);transform-origin:0 0;-webkit-text-stroke:0.3px #2a2a2a;">2025-01-20 11:03:47</div>
<div class="b" style="left:3.00px;top:496.90px;width:1074.00px;height:1.00px;background:#eff0f2"></div>
<svg class="b" style="left:50.60px;top:512.90px" width="11" height="11" viewBox="0 0 11 11"><circle cx="5.3" cy="5.3" r="5.1" fill="#e5383d"/><path d="M6.9 4.3 A1.9 1.9 0 1 0 6.9 6.3" fill="none" stroke="#fff" stroke-width="1.2"/></svg>
<div class="t" style="left:84.10px;top:514.00px;font-size:10px;color:#dc5252;font-family:'Liberation Mono', monospace;font-weight:400;">0xbb0f4...d851ce</div>
<div class="b" style="left:191.40px;top:506.80px;width:84.00px;height:20.30px;border:1px solid #e4e6e9;border-radius:11px;box-sizing:border-box;background:#fff"></div>
<div class="b" style="left:197.60px;top:514.70px;width:5.00px;height:5.00px;background:#3aa57f;border-radius:50%"></div>
<div class="t" style="left:208.30px;top:513.00px;font-size:9.17px;color:#333;font-family:'Liberation Mono', monospace;font-weight:400;">Receive Me…</div>
<div class="t" style="left:290.60px;top:513.00px;font-size:10.2px;color:#dc5252;font-family:'Liberation Sans', sans-serif;font-weight:400;">Burn:</div>
<div class="t" style="left:317.80px;top:514.00px;font-size:10px;color:#dc5252;font-family:'Liberation Mono', monospace;font-weight:400;letter-spacing:0.4px;">0x000…000</div>
<svg class="b" style="left:417.90px;top:510.70px" width="10.2" height="12" viewBox="0 0 11 13"><rect x="0.9" y="3" width="6.5" height="9" rx="1.6" fill="#fff" stroke="#383838" stroke-width="1.55"/><path d="M4.2 1.1 H7.6 L9.9 3.4 V8.6 Q9.9 10 8.5 10 H4.2 Q2.8 10 2.8 8.6 V2.5 Q2.8 1.1 4.2 1.1 Z" fill="#fff" stroke="#383838" stroke-width="1.5"/><path d="M7.4 1.1 V3.6 H9.9" fill="#3d3d3d" stroke="#3d3d3d" stroke-width="0.9"/></svg>
<div class="b" style="left:448.30px;top:507.00px;width:34.00px;height:18.80px;background:#e7f5f1;border-radius:3px"></div>
<div class="t" style="left:460.90px;top:513.00px;font-size:8.8px;color:#3aa585;font-family:'Liberation Sans', sans-serif;font-weight:700;-webkit-text-stroke-width:0;">IN</div>
<svg class="b" style="left:503.60px;top:511.80px" width="9" height="11" viewBox="0 0 9 11"><path d="M2.1 0.75 H5.4 L8.3 3.6 V8.6 Q8.3 10.25 6.7 10.25 H2.1 Q0.75 10.25 0.75 8.6 V2.3 Q0.75 0.75 2.1 0.75 Z" fill="#fff" stroke="#222" stroke-width="1.45"/><path d="M5.0 0.8 L8.3 4.1 H5.6 Q5.0 4.1 5.0 3.5 Z" fill="#222"/><path d="M3.5 5.9 L2.2 7.2 L3.5 8.5 M5.5 5.9 L6.8 7.2 L5.5 8.5" fill="none" stroke="#222" stroke-width="1.25"/></svg>
<div class="t" style="left:516.10px;top:513.00px;font-size:10px;color:#222;font-family:'Liberation Mono', monospace;font-weight:400;">0xcEAe...A006e2</div>
<svg class="b" style="left:631.20px;top:511.00px" width="10.2" height="12" viewBox="0 0 11 13"><rect x="0.9" y="3" width="6.5" height="9" rx="1.6" fill="#fff" stroke="#383838" stroke-width="1.55"/><path d="M4.2 1.1 H7.6 L9.9 3.4 V8.6 Q9.9 10 8.5 10 H4.2 Q2.8 10 2.8 8.6 V2.5 Q2.8 1.1 4.2 1.1 Z" fill="#fff" stroke="#383838" stroke-width="1.5"/><path d="M7.4 1.1 V3.6 H9.9" fill="#3d3d3d" stroke="#3d3d3d" stroke-width="0.9"/></svg>
<div class="t" style="left:661.40px;top:514.00px;font-size:10.0px;color:#2a2a2a;font-family:'Liberation Mono', monospace;font-weight:400;letter-spacing:-0.22px;">500,000</div>
<svg class="b" style="left:777.00px;top:511.40px" width="11" height="11" viewBox="0 0 20 20"><circle cx="10" cy="10" r="10" fill="#2775ca"/><path d="M7.2 3.6 A7 7 0 0 0 7.2 16.4 M12.8 3.6 A7 7 0 0 1 12.8 16.4" fill="none" stroke="#fff" stroke-width="1.5"/><path d="M12 7.6 C11.6 6.8 10.8 6.6 10 6.6 C8.9 6.6 8.1 7.1 8.1 8 C8.1 9.9 12 9.2 12 11.6 C12 12.6 11.1 13.3 10 13.3 C9 13.3 8.3 12.9 7.9 12.1 M10 5.4 V6.6 M10 13.3 V14.6" fill="none" stroke="#fff" stroke-width="1.2"/></svg>
<div class="t" style="left:793.90px;top:512.00px;font-size:10.8px;color:#dc5252;font-family:'Liberation Sans', sans-serif;font-weight:400;transform:scaleX(0.912);transform-origin:0 0;">USD Coin (USDC)</div>
<div class="t" style="left:914.30px;top:513.00px;font-size:10.3px;color:#2a2a2a;font-family:'Liberation Mono', monospace;font-weight:400;transform:scaleX(0.9);transform-origin:0 0;-webkit-text-stroke:0.3px #2a2a2a;">2025-01-20 10:38:21</div>
<div class="b" style="left:3.00px;top:532.30px;width:1074.00px;height:1.00px;background:#eff0f2"></div>
<div class="b" style="left:193.00px;top:557.50px;width:80.00px;height:6.00px;border-bottom:1px solid #e6e8eb;border-radius:0 0 7px 7px;box-sizing:border-box;background:transparent"></div>
<div class="b" style="left:448.50px;top:559.50px;width:33.60px;height:3.60px;background:#e3f5f0;border-radius:0 0 3px 3px"></div>
<div class="b" style="left:17.40px;top:318.40px;width:1048.40px;height:36.90px;border:5px solid #fbe000;border-radius:3px;box-sizing:border-box;z-index:4"></div>
<div class="b" style="left:17.40px;top:428.90px;width:1048.40px;height:107.70px;border:5px solid #fbe000;border-radius:3px;box-sizing:border-box;z-index:4"></div>
</div></body></html>
